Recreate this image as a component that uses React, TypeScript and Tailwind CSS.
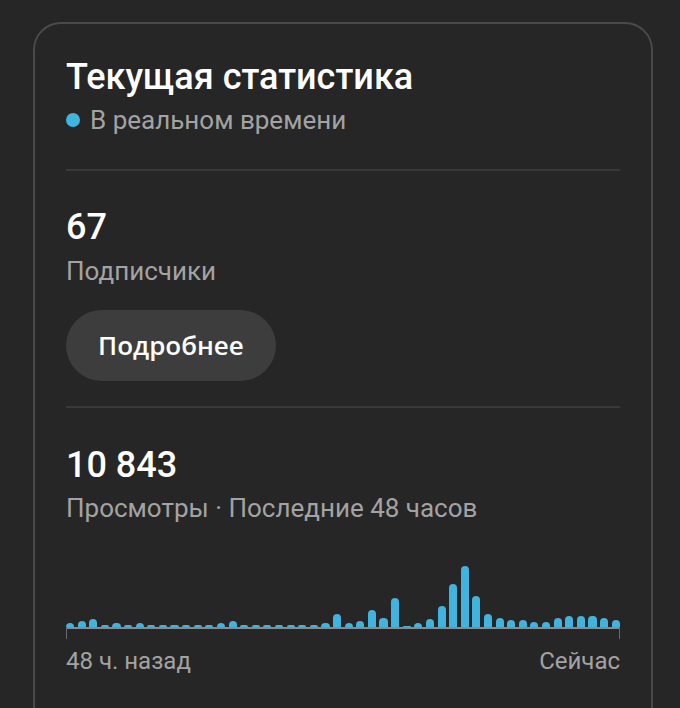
const bars = [
  4, 6, 8, 2, 4, 2, 4, 2, 2, 2, 2, 2, 2, 4, 6, 2, 2, 2, 2, 2, 2, 2,
  4, 13, 4, 6, 17, 9, 29, 1, 4, 8, 21, 43, 61, 31, 13, 9, 7, 7, 5, 5, 9, 11, 11, 11, 9, 7,
];

export default function App() {
  return (
    <div className="h-[708px] w-[680px] overflow-hidden bg-[#262626] pt-[22px] pl-[33px] font-['Roboto',sans-serif]">
      <div className="w-[620px] h-[760px] rounded-[28px] border-2 border-[#4a4a4a] px-[31px] pt-[33px]">
        <h1 className="text-[36px] leading-[40px] font-medium text-white">Текущая статистика</h1>
        <div className="mt-[7px] flex items-center gap-[10px] text-[26px] leading-[32px] text-[#a3a3a3]">
          <span className="h-[14px] w-[14px] rounded-full bg-[#40b3df]" />
          <span>В реальном времени</span>
        </div>

        <div className="mt-[33px] h-[2px] bg-[#393939]" />

        <div className="mt-[36px] text-[36px] leading-[40px] font-medium text-white">67</div>
        <div className="mt-[8px] text-[26px] leading-[32px] text-[#a3a3a3]">Подписчики</div>
        <button className="mt-[23px] h-[71px] rounded-full bg-[#3d3d3d] px-[32px] font-['Open_Sans',sans-serif] text-[26px] font-semibold text-white">
          Подробнее
        </button>

        <div className="mt-[25px] h-[2px] bg-[#393939]" />

        <div className="mt-[37px] text-[36px] leading-[40px] font-medium text-white">10 843</div>
        <div className="mt-[7px] text-[26px] leading-[32px] text-[#a3a3a3]">Просмотры · Последние 48 часов</div>

        <div className="flex h-[103px] items-end gap-[3.5px]">
          {bars.map((h, i) => (
            <div key={i} className="flex-1 rounded-t-[4px] bg-[#40b3df]" style={{ height: h }} />
          ))}
        </div>
        <div className="relative h-[2px] bg-[#8a8a8a]">
          <div className="absolute left-0 top-0 h-[12px] w-px bg-[#6a6a6a]" />
          <div className="absolute right-0 top-0 h-[12px] w-px bg-[#6a6a6a]" />
        </div>
        <div className="mt-[18px] flex justify-between text-[24px] leading-[28px] text-[#a3a3a3]">
          <span>48 ч. назад</span>
          <span>Сейчас</span>
        </div>
      </div>
    </div>
  );
}
